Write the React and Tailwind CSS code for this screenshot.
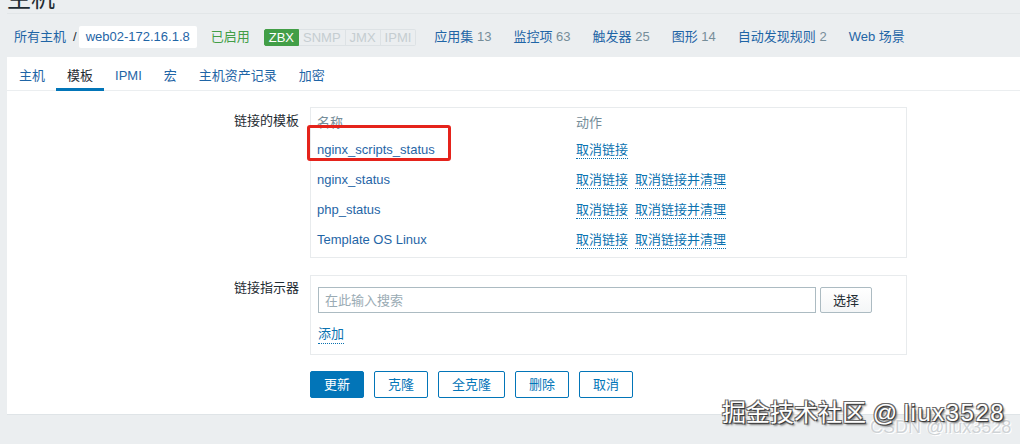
export default function App() {
  const navItems = [
    ["应用集", "13"],
    ["监控项", "63"],
    ["触发器", "25"],
    ["图形", "14"],
    ["自动发现规则", "2"],
    ["Web 场景", ""],
  ];
  const tabs = ["主机", "模板", "IPMI", "宏", "主机资产记录", "加密"];
  const templates = [
    ["nginx_scripts_status", false],
    ["nginx_status", true],
    ["php_status", true],
    ["Template OS Linux", true],
  ];
  return (
    <div className="w-[1020px] h-[444px] bg-[#ebeef0] overflow-hidden relative text-[13px] text-[#1f2c33] font-['Liberation_Sans','Noto_Sans_CJK_SC',sans-serif]">
      {/* page header (cut off) */}
      <div className="h-[14px] overflow-hidden border-b border-[#e2e6e8] ml-[7px]">
        <div className="text-[24px] leading-[24px] -mt-[13px] text-[#1f2c33]">主机</div>
      </div>

      {/* breadcrumb row */}
      <div className="mt-[12px] h-[22px] flex items-center pl-[14px] leading-[22px]">
        <span className="text-[#1f65a6]">所有主机</span>
        <span className="ml-[7px] text-[#1f2c33]">/</span>
        <span className="ml-[2px] bg-white px-[7px] h-[22px] rounded-[2px] text-[#1f65a6]">web02-172.16.1.8</span>
        <span className="ml-[14px] text-[#429e47]">已启用</span>
        <div className="ml-[14px] flex h-[17px] leading-[15px] text-[#c5cdd1]">
          <span className="bg-[#429e47] text-white px-[4px] border border-[#429e47] rounded-l-[2px]">ZBX</span>
          <span className="px-[4px] border border-l-0 border-[#dde2e5]">SNMP</span>
          <span className="px-[4px] border border-l-0 border-[#dde2e5]">JMX</span>
          <span className="px-[4px] border border-l-0 border-[#dde2e5] rounded-r-[2px]">IPMI</span>
        </div>
        <div className="ml-[18px] flex gap-[22px]">
          {navItems.map(([label, n]) => (
            <span key={label} className="whitespace-nowrap">
              <span className="text-[#1f65a6]">{label}</span>
              {n && <span className="text-[#768d99]"> {n}</span>}
            </span>
          ))}
        </div>
      </div>

      {/* main panel */}
      <div className="mt-[9px] ml-[7px] bg-white h-[358px] border-b border-[#dfe4e7] flex flex-col">
        {/* tabs */}
        <div className="h-[34px] border-b border-[#ebeef0] flex pl-[1px]">
          {tabs.map((t) => (
            <div
              key={t}
              className={
                t === "模板"
                  ? "px-[11px] pt-[6px] flex items-center border-b-[3px] border-[#0275b8] text-[#1f2c33] -mb-px"
                  : "px-[11px] pt-[6px] flex items-center border-b-[3px] border-transparent text-[#1f65a6] -mb-px"
              }
            >
              {t}
            </div>
          ))}
        </div>

        {/* form */}
        <div className="pt-[16px]">
          {/* linked templates */}
          <div className="flex">
            <div className="w-[303px] pr-[11px] pt-[2px] text-right leading-[24px]">链接的模板</div>
            <div className="w-[597px] h-[151px] border border-[#e8ebed] pt-[3px] relative">
              <div className="flex h-[24px] items-center px-[6px] text-[#768d99]">
                <div className="w-[259px]">名称</div>
                <div>动作</div>
              </div>
              {templates.map(([name, clear]) => (
                <div key={name} className="flex h-[30px] items-center px-[6px]">
                  <div className="w-[259px] text-[#1f65a6]">{name}</div>
                  <div className="flex gap-[7px] text-[#0b72b0]">
                    <span className="border-b border-dotted border-[#0b72b0] leading-[17px]">取消链接</span>
                    {clear && (
                      <span className="border-b border-dotted border-[#0b72b0] leading-[17px]">取消链接并清理</span>
                    )}
                  </div>
                </div>
              ))}
              <div className="absolute left-[-4px] top-[17px] w-[144px] h-[36px] border-[3px] border-[#e5231b] rounded-[3px]" />
            </div>
          </div>

          {/* linked indicators */}
          <div className="flex mt-[17px]">
            <div className="w-[303px] pr-[11px] pt-[1px] text-right leading-[24px]">链接指示器</div>
            <div className="w-[597px] h-[80px] border border-[#e8ebed] pt-[11px] px-[7px]">
              <div className="flex">
                <div className="w-[498px] h-[26px] border border-[#acbbc2] pl-[6px] pt-[1px] flex items-center text-[#9aabb4]">
                  在此输入搜索
                </div>
                <div className="ml-[4px] w-[52px] h-[26px] border border-[#acbbc2] rounded-[2px] pt-[1px] flex items-center justify-center bg-gradient-to-b from-white to-[#f4f6f7]">
                  选择
                </div>
              </div>
              <div className="mt-[11px] h-[20px] flex items-center">
                <span className="text-[#0b72b0] border-b border-dotted border-[#0b72b0] leading-[18px]">添加</span>
              </div>
            </div>
          </div>

          {/* buttons */}
          <div className="flex mt-[16px] pl-[303px] gap-[10px]">
            <div className="h-[27px] px-[13px] pt-[1px] rounded-[2px] bg-[#0275b8] border border-[#0275b8] text-white flex items-center">更新</div>
            {["克隆", "全克隆", "删除", "取消"].map((b) => (
              <div key={b} className="h-[27px] px-[13px] pt-[1px] rounded-[2px] bg-white border border-[#0275b8] text-[#0275b8] flex items-center">
                {b}
              </div>
            ))}
          </div>
        </div>
      </div>

      {/* watermarks */}
      <div className="absolute left-[870px] top-[418px] text-[18px] leading-[18px] text-[#cfd3d6] whitespace-nowrap [text-shadow:1px_1px_0_#ffffff,-1px_-1px_0_#ffffff]">
        CSDN @liux3528
      </div>
      <div className="absolute left-[722px] top-[401px] text-[24px] leading-[24px] text-white whitespace-nowrap [text-shadow:1px_1px_0_#3a3a3a,-1px_-1px_0_#6a6a6a,1px_-1px_0_#6a6a6a,-1px_1px_0_#6a6a6a,2px_2px_2px_#666666]">
        掘金技术社区 <span>@</span> <span className="tracking-[1.5px]">liux3528</span>
      </div>
    </div>
  );
}
